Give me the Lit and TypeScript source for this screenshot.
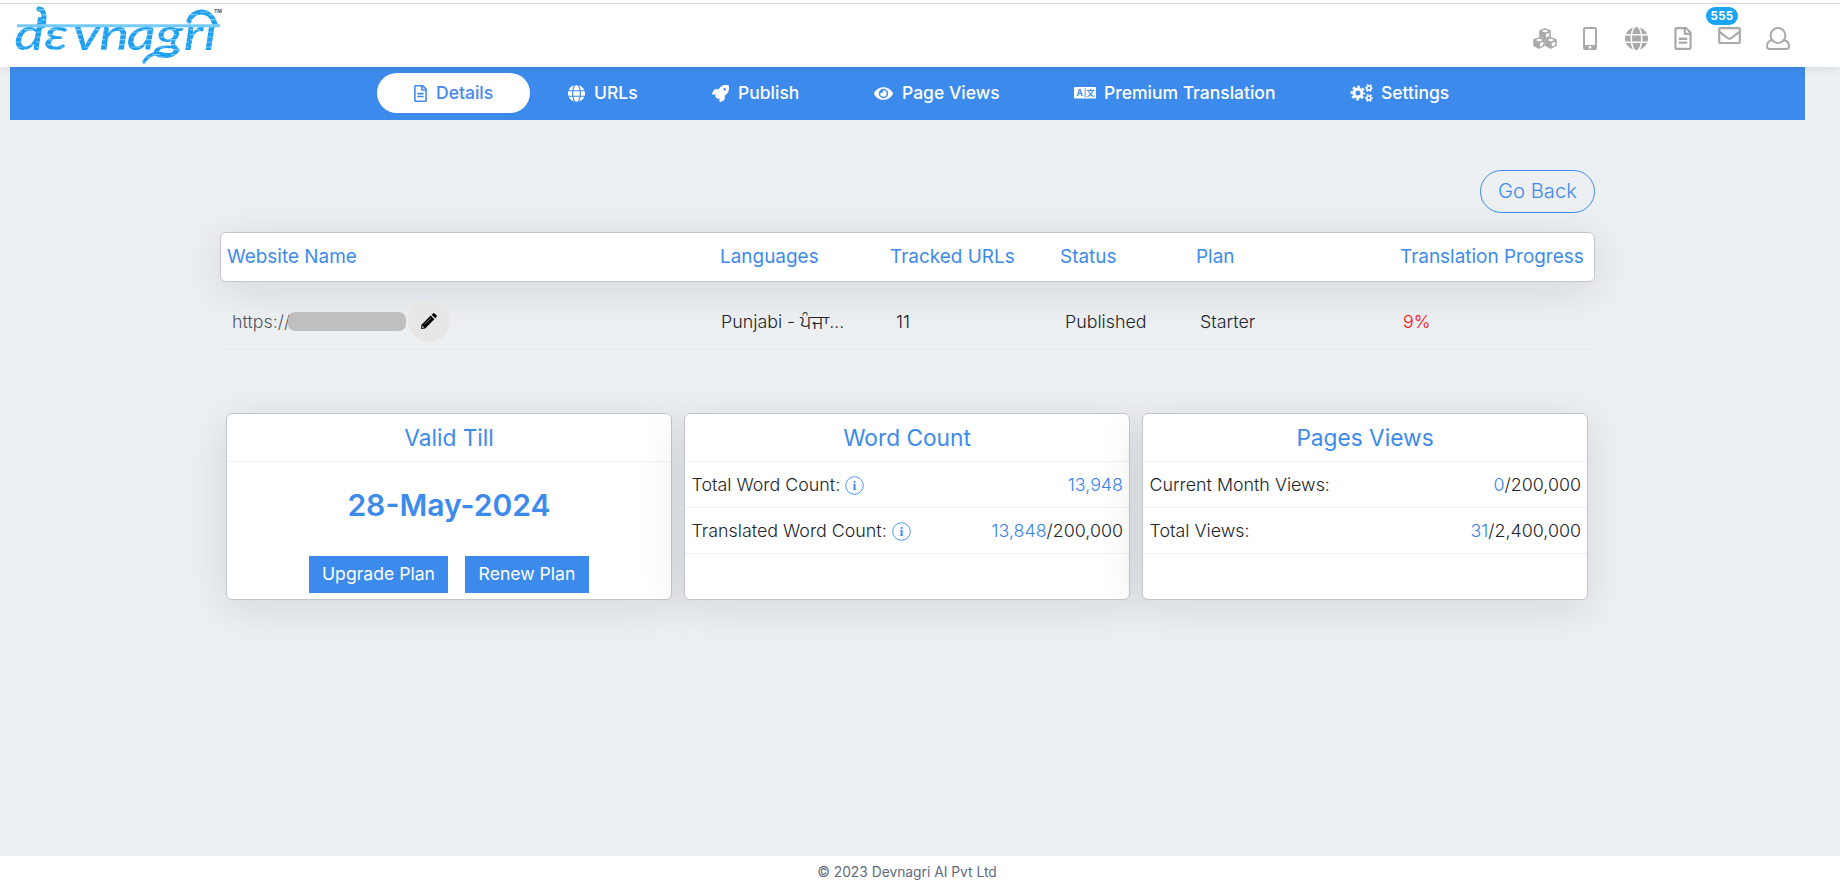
import { LitElement, html, css, svg } from "lit";
import { customElement } from "lit/decorators.js";

const FILE =
  "M288 248v28c0 6.6-5.4 12-12 12H108c-6.6 0-12-5.4-12-12v-28c0-6.6 5.4-12 12-12h168c6.6 0 12 5.4 12 12zm-12 72H108c-6.6 0-12 5.4-12 12v28c0 6.6 5.4 12 12 12h168c6.6 0 12-5.4 12-12v-28c0-6.6-5.4-12-12-12zm108-188.1V464c0 26.5-21.5 48-48 48H48c-26.5 0-48-21.5-48-48V48C0 21.5 21.5 0 48 0h204.1C264.8 0 277 5.1 286 14.1L369.9 98c9 8.9 14.1 21.2 14.1 33.9zm-128-80V128h76.1L256 51.9zM336 464V176H232c-13.3 0-24-10.7-24-24V48H48v416h288z";
const GLOBE =
  "M336.5 160C322 70.7 287.8 8 248 8s-74 62.7-88.5 152h177zM152 256c0 22.2 1.2 43.5 3.3 64h185.3c2.1-20.5 3.3-41.8 3.3-64s-1.2-43.5-3.3-64H155.3c-2.1 20.5-3.3 41.8-3.3 64zm324.7-96c-28.6-67.9-86.5-120.4-158-141.6 24.4 33.8 41.2 84.7 50 141.6h108zM177.2 18.4C105.8 39.6 47.8 92.1 19.3 160h108c8.7-56.9 25.5-107.8 49.9-141.6zM487.4 192H372.7c2.1 21 3.3 42.5 3.3 64s-1.2 43-3.3 64h114.6c5.5-20.5 8.6-41.8 8.6-64s-3.1-43.5-8.5-64zM120 256c0-21.5 1.2-43 3.3-64H8.6C3.2 212.5 0 233.8 0 256s3.2 43.5 8.6 64h114.6c-2-21-3.2-42.5-3.2-64zm39.5 96c14.5 89.3 48.7 152 88.5 152s74-62.7 88.5-152h-177zm159.3 141.6c71.4-21.2 129.4-73.7 158-141.6h-108c-8.8 56.9-25.6 107.8-50 141.6zM19.3 352c28.6 67.9 86.5 120.4 158 141.6-24.4-33.8-41.2-84.7-50-141.6h-108z";
const ENVELOPE =
  "M464 64H48C21.49 64 0 85.49 0 112v288c0 26.51 21.49 48 48 48h416c26.51 0 48-21.49 48-48V112c0-26.51-21.49-48-48-48zm0 48v40.805c-22.422 18.259-58.168 46.651-134.587 106.49-16.841 13.247-50.201 45.072-73.413 44.701-23.208.375-56.579-31.459-73.413-44.701C106.18 199.465 70.425 171.067 48 152.805V112h416zM48 400V214.398c22.914 18.251 55.409 43.862 104.938 82.646 21.857 17.205 60.134 55.186 103.062 54.955 42.717.231 80.509-37.199 103.053-54.947 49.528-38.783 82.032-64.401 104.947-82.653V400H48z";
const ROCKET =
  "M505.12 19.09c-1.19-5.53-6.66-11-12.21-12.19C460.72 0 435.51 0 410.41 0 307.18 0 245.27 55.2 199.05 128H94.84c-16.35.02-35.56 11.88-42.89 26.48L2.52 253.3A28.4 28.4 0 0 0 0 264a24 24 0 0 0 24 24h103.82l-22.48 22.47c-11.37 11.36-13 32.26 0 45.25l50.9 50.9c11.16 11.2 32.16 13.16 45.28 0L224 384.16V488a24 24 0 0 0 24 24 28.56 28.56 0 0 0 10.71-2.52l98.73-49.39c14.63-7.3 26.5-26.5 26.5-42.86V312.8c72.6-46.31 128.04-108.4 128.04-211.1.09-25.2.09-50.4-6.86-82.61zM384.04 168A40 40 0 1 1 424.05 128 40.02 40.02 0 0 1 384.04 168z";
const EYE =
  "M572.52 241.4C518.29 135.59 410.93 64 288 64S57.68 135.64 3.48 241.41a32.35 32.35 0 0 0 0 29.19C57.71 376.41 165.07 448 288 448s230.32-71.64 284.52-177.41a32.35 32.35 0 0 0 0-29.19zM288 400a144 144 0 1 1 144-144 143.93 143.93 0 0 1-144 144zm0-240a95.31 95.31 0 0 0-25.31 3.79 47.85 47.85 0 0 1-66.9 66.9A95.78 95.78 0 1 0 288 160z";

const glyph = (d: string, box: string, w: number, h: number) => html`
  <svg width=${w} height=${h} viewBox=${box} fill="currentColor"><path d=${d} /></svg>
`;

const cube = (x: number, y: number) => svg`
  <g transform="translate(${x} ${y})">
    <path d="M5.9 0L11.3 2V8.3L5.9 11L.5 8.3V2z" fill="currentColor" stroke="currentColor" stroke-width=".8" stroke-linejoin="round" />
    <path d="M5.9 1.2L9.5 2.5L5.9 3.9L2.3 2.5z M6.8 5.6L10.1 4.2V7.6L6.8 9.2z" fill="#fff" />
  </g>
`;
const cubes = html`
  <svg width="24" height="21" viewBox="0 0 24 21">${cube(6.1, 0.5)}${cube(0.2, 9.5)}${cube(12, 9.5)}</svg>
`;
const mobile = html`
  <svg width="14" height="23" viewBox="0 0 14 23">
    <path fill="currentColor" fill-rule="evenodd"
      d="M2.2 0h9.6A2.2 2.2 0 0 1 14 2.2v18.6a2.2 2.2 0 0 1-2.2 2.2H2.2A2.2 2.2 0 0 1 0 20.8V2.2A2.2 2.2 0 0 1 2.2 0zM2 2v16h10V2zM7 18.9a1.400 1.400 0 1 0 0 2.800 1.400 1.400 0 0 0 0-2.800z" />
  </svg>
`;
const user = html`
  <svg width="24" height="23" viewBox="0 0 24 23" fill="none" stroke="currentColor" stroke-width="2">
    <path stroke-linejoin="round"
      d="M7.300 13.300C3.500 13.300 1 15.500 1 19.200C1 21 2 22 3.600 22H20.400C22 22 23 21 23 19.200C23 15.500 20.500 13.300 16.700 13.300" />
    <circle cx="12" cy="8.500" r="7.400" />
  </svg>
`;
const language = html`
  <svg width="22" height="12" viewBox="0 0 22 12">
    <rect width="22" height="11.500" rx="1" fill="currentColor" />
    <rect x="10.700" y="1" width=".9" height="9.500" fill="#3c8bec" />
    <text class="lang-a" x="5.600" y="9" text-anchor="middle">A</text>
    <text class="lang-z" x="16.500" y="9" text-anchor="middle">文</text>
  </svg>
`;
const cog = (cx: number, cy: number, r: number, ring: number, tooth: number, teeth: number) => {
  const rt = r + ring / 2 + tooth / 2 - 0.3;
  const step = (2 * Math.PI * rt) / teeth;
  return svg`
    <circle cx=${cx} cy=${cy} r=${r} fill="none" stroke="currentColor" stroke-width=${ring} />
    <circle cx=${cx} cy=${cy} r=${rt} fill="none" stroke="currentColor" stroke-width=${tooth}
      stroke-dasharray="${step * 0.52} ${step * 0.48}" stroke-dashoffset=${step * 0.26} />
  `;
};
const cogs = html`
  <svg width="23" height="18" viewBox="0 0 23 18">
    ${cog(7.9, 9, 4, 3, 2.2, 8)}${cog(18.9, 4, 2.1, 1.5, 1.4, 6)}${cog(18.9, 14, 2.1, 1.5, 1.4, 6)}
  </svg>
`;
const pencil = html`
  <svg width="16" height="16" viewBox="0 0 16 16">
    <path d="M0 16L.5 11.800L9.700 2.600L13.300 6.200L4.200 15.400z" fill="#000" />
    <path d="M10.600 1.700L12 .4Q12.800-.2 13.700.6L15.400 2.300Q16.100 3.200 15.400 4L14.200 5.300z" fill="#000" />
    <path d="M1.400 12.600L3.400 14.600L1 15.200z" fill="#aaa" />
    <path d="M3.600 11.200L9.900 4.900" stroke="#aaa" stroke-width=".8" />
  </svg>
`;
const info = html`
  <svg class="info" width="19" height="19" viewBox="0 0 19 19">
    <circle cx="9.500" cy="9.500" r="8.800" fill="none" stroke="#3c8bec" stroke-width=".9" />
    <text class="info-i" x="9.500" y="14" text-anchor="middle">i</text>
  </svg>
`;

const logo = html`
  <svg class="logo" width="225" height="62" viewBox="0 0 225 62">
    <defs>
      <pattern id="brush" width="19" height="5" patternUnits="userSpaceOnUse">
        <rect width="19" height="5" fill="#1f9ff0" />
        <rect y="0" width="8" height="1.300" fill="#7accf9" />
        <rect x="10" y="2.500" width="8" height="1.200" fill="#66c2f8" />
      </pattern>
    </defs>
    <g transform="scale(1.25 1)">
      <text class="mark" fill="url(#brush)" x="11.500 35.500 58.500 79.500 101.500 124.500 147 163" y="46">dεvnagrı</text>
    </g>
    <g fill="none" stroke="url(#brush)" stroke-linecap="round">
      <path d="M39 5Q44 5 44 15L43 22" stroke-width="5" />
      <path d="M189 17C192 6 210 3 215 20" stroke-width="5" />
      <path d="M178 46C170 56 163 47 154 50Q147 52 144 58" stroke-width="3.500" />
    </g>
    <path d="M17 21.800H220" stroke="#74caf9" stroke-width="3" />
    <text class="tm" x="214" y="8.500">TM</text>
  </svg>
`;

@customElement("app-root")
export class AppRoot extends LitElement {
  static styles = css`
    :host {
      display: flex;
      flex-direction: column;
      height: 887px;
      background: #ecf0f3;
      font-family: Inter, "Noto Sans", sans-serif;
      font-size: 17.850px;
      font-weight: 300;
      color: #212529;
    }
    * { box-sizing: border-box; }
    svg { display: block; flex: none; overflow: visible; }
    .header {
      position: relative;
      z-index: 1;
      height: 67px;
      flex: none;
      background: #fff;
      box-shadow: 0 1px 8px rgba(60, 40, 60, 0.12);
    }
    .strip { height: 4px; border-bottom: 1px solid #d9d9dc; }
    .bar { display: flex; justify-content: space-between; align-items: flex-start; height: 63px; }
    .mark { font: italic 500 45px Lato, sans-serif; }
    .tm { font: 700 5px Inter, sans-serif; fill: #555; }
    .tools { display: flex; align-items: flex-start; color: #a9a9a9; padding: 23px 50px 0 0; }
    .tool { position: relative; }
    .badge {
      position: absolute;
      left: -12px;
      top: -20px;
      width: 32px;
      height: 18px;
      border-radius: 9px;
      background: #18a4f8;
      color: #fff;
      font-size: 11.500px;
      font-weight: 700;
      letter-spacing: 0.3px;
      line-height: 18px;
      text-align: center;
    }
    .g1 { margin: 1px 26px 0 0; }
    .g2 { margin-right: 28px; }
    .g3 { margin-right: 26px; }
    .g4 { margin-right: 26px; }
    .g5 { margin-right: 25px; }
    .nav {
      height: 53px;
      flex: none;
      margin: 0 35px 0 10px;
      padding: 6px 0 0 367px;
      background: #3c8bec;
      display: flex;
    }
    .item {
      display: flex;
      align-items: center;
      height: 40px;
      color: #fff;
      font-size: 17.500px;
      font-weight: 500;
      white-space: nowrap;
    }
    .item.active { background: #fff; color: #4489f0; border-radius: 20px; }
    .label { line-height: 22px; margin-top: -1px; }
    .n1 { width: 153px; padding-left: 37px; gap: 9px; }
    .n2 { width: 144px; padding-left: 38px; gap: 9px; }
    .n3 { width: 163px; padding-left: 38px; gap: 9px; }
    .n4 { width: 200px; padding-left: 37px; gap: 9px; }
    .n5 { width: 276px; padding-left: 37px; gap: 8px; }
    .n6 { padding-left: 37px; gap: 8px; }
    .lang-a { font: 700 8.500px Inter, sans-serif; fill: #3c8bec; }
    .lang-z { font: 700 8px "Noto Sans CJK SC", sans-serif; fill: #3c8bec; }
    .content { flex: 1; width: 1375px; margin-left: 220px; padding-top: 50px; }
    .actions { display: flex; justify-content: flex-end; }
    .back {
      width: 115px;
      height: 43px;
      border: 1px solid #3c8bec;
      border-radius: 22px;
      color: #3c8bec;
      font-size: 20.200px;
      line-height: 40px;
      text-align: center;
    }
    .panel { background: #fff; border: 1px solid #c3c5c8; border-radius: 6px; box-shadow: 0 8px 46px rgba(20, 20, 30, 0.115); }
    .thead {
      display: grid;
      grid-template-columns: 493px 170px 170px 136px 204px 1fr;
      align-items: center;
      height: 50px;
      margin-top: 19px;
      padding-left: 6px;
      color: #3c8bec;
      font-size: 18.950px;
      font-weight: 400;
      white-space: nowrap;
      line-height: 46px;
    }
    .row {
      display: grid;
      grid-template-columns: 489px 175px 169px 135px 203px 1fr;
      align-items: center;
      height: 68px;
      padding: 11px 0 0 12px;
      border-bottom: 1px solid #e6e8eb;
    }
    .cell { line-height: 42px; height: 42px; padding-top: 1px; white-space: nowrap; }
    .url { display: flex; align-items: center; height: 42px; color: #55595c; }
    .mask { width: 118px; height: 19px; border-radius: 7px; background: #bfbfbf; margin: 0 2px 0 -2px; }
    .edit { width: 42px; height: 42px; border-radius: 50%; background: #e7e7e7; display: grid; place-items: center; }
    .red { color: #ff0808; }
    .cards { display: grid; grid-template-columns: repeat(3, 446px); gap: 12px; margin: 63px 0 0 6px; }
    .card { height: 187px; }
    .title {
      height: 48px;
      border-bottom: 1px solid #f0f1f2;
      text-align: center;
      color: #3c8bec;
      font-size: 22.700px;
      font-weight: 400;
      line-height: 47px;
    }
    .line {
      display: flex;
      align-items: center;
      height: 46px;
      border-bottom: 1px solid #f0f1f2;
      padding: 0 6px 0 6.500px;
    }
    .line .info { margin-left: 5px; margin-top: 2px; }
    .info-i { font: 700 13.500px "Liberation Serif", serif; fill: #3c8bec; }
    .amount { margin-left: auto; }
    .blue { color: #3884ee; }
    .date { color: #3c8bec; font-size: 30.100px; font-weight: 600; line-height: 36px; text-align: center; margin-top: 25px; }
    .buttons { display: flex; justify-content: center; gap: 17px; margin-top: 33px; }
    .button { height: 37px; background: #3c8bec; color: #fff; font-size: 17.600px; font-weight: 400; line-height: 35px; text-align: center; }
    .upgrade { width: 139px; }
    .renew { width: 124px; }
    .footer {
      height: 31px;
      flex: none;
      background: #fff;
      padding-right: 26px;
      color: #5f6b7c;
      font-size: 13.800px;
      font-weight: 400;
      line-height: 32px;
      text-align: center;
    }
  `;

  render() {
    return html`
      <header class="header">
        <div class="strip"></div>
        <div class="bar">
          ${logo}
          <div class="tools">
            <div class="tool g1">${cubes}</div>
            <div class="tool g2">${mobile}</div>
            <div class="tool g3">${glyph(GLOBE, "0 8 496 496", 23, 23)}</div>
            <div class="tool g4">${glyph(FILE, "0 0 384 512", 18, 23)}</div>
            <div class="tool g5">${glyph(ENVELOPE, "0 64 512 384", 23, 17)}<span class="badge">555</span></div>
            <div class="tool">${user}</div>
          </div>
        </div>
      </header>
      <nav class="nav">
        <div class="item active n1">${glyph(FILE, "0 0 384 512", 13, 17)}<span class="label">Details</span></div>
        <div class="item n2">${glyph(GLOBE, "0 8 496 496", 17, 17)}<span class="label">URLs</span></div>
        <div class="item n3">${glyph(ROCKET, "0 0 512 512", 17, 17)}<span class="label">Publish</span></div>
        <div class="item n4">${glyph(EYE, "0 64 576 384", 19, 13)}<span class="label">Page Views</span></div>
        <div class="item n5">${language}<span class="label">Premium Translation</span></div>
        <div class="item n6">${cogs}<span class="label">Settings</span></div>
      </nav>
      <main class="content">
        <div class="actions"><div class="back">Go Back</div></div>
        <div class="panel thead">
          <span>Website Name</span><span>Languages</span><span>Tracked URLs</span><span>Status</span><span>Plan</span
          ><span>Translation Progress</span>
        </div>
        <div class="row">
          <div class="url"><span>https://</span><span class="mask"></span><span class="edit">${pencil}</span></div>
          <div class="cell">Punjabi - ਪੰਜਾ...</div>
          <div class="cell">11</div>
          <div class="cell">Published</div>
          <div class="cell">Starter</div>
          <div class="cell red">9%</div>
        </div>
        <section class="cards">
          <div class="panel card">
            <div class="title">Valid Till</div>
            <div class="date">28-May-2024</div>
            <div class="buttons"><div class="button upgrade">Upgrade Plan</div><div class="button renew">Renew Plan</div></div>
          </div>
          <div class="panel card">
            <div class="title">Word Count</div>
            <div class="line"><span>Total Word Count:</span>${info}<span class="amount blue">13,948</span></div>
            <div class="line">
              <span>Translated Word Count:</span>${info}<span class="amount"><span class="blue">13,848</span>/200,000</span>
            </div>
          </div>
          <div class="panel card">
            <div class="title">Pages Views</div>
            <div class="line"><span>Current Month Views:</span><span class="amount"><span class="blue">0</span>/200,000</span></div>
            <div class="line"><span>Total Views:</span><span class="amount"><span class="blue">31</span>/2,400,000</span></div>
          </div>
        </section>
      </main>
      <footer class="footer">© 2023 Devnagri AI Pvt Ltd</footer>
    `;
  }
}
